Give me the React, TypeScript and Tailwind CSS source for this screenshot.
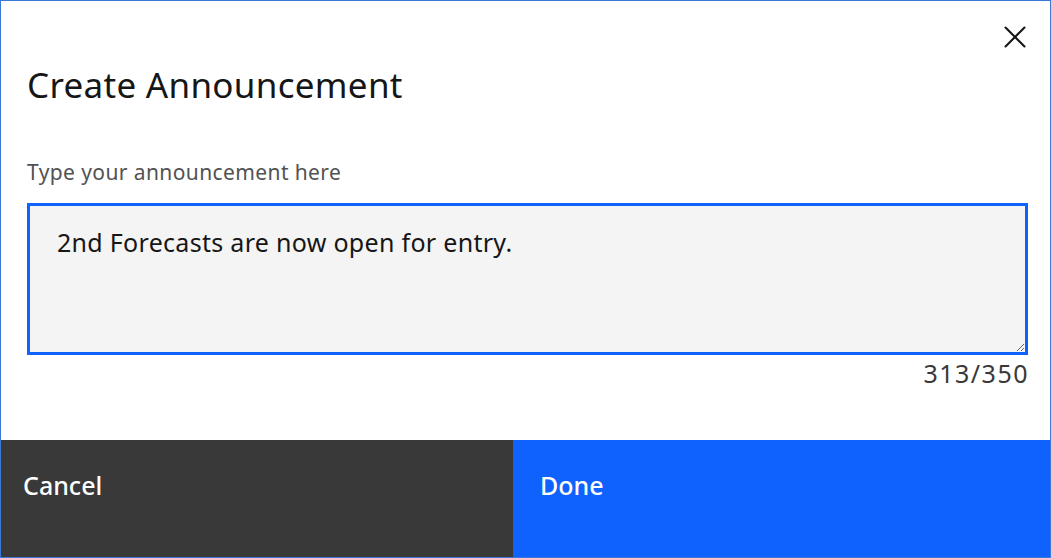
import { X } from 'lucide-react';

export default function App() {
  return (
    <div className="w-[1051px] h-[558px] bg-white border border-[#3c78d8] flex flex-col font-['Noto_Sans',sans-serif] text-[#161616] overflow-hidden">
      <div className="flex-1 flex flex-col pl-[26px] pr-[22px]">
        <div className="flex justify-end pt-[17px] -mr-[6px]">
          <button className="w-[38px] h-[38px] flex items-center justify-center text-[#161616]">
            <X className="w-[38px] h-[38px]" strokeWidth={1.3} />
          </button>
        </div>
        <h2 className="text-[35px] leading-[40px] font-normal mt-[9px] tracking-[0.3px]">Create Announcement</h2>
        <label className="text-[21px] leading-[24px] text-[#525252] mt-[55px] tracking-[0.4px]">Type your announcement here</label>
        <textarea
          readOnly
          value="2nd Forecasts are now open for entry."
          className="mt-[19px] h-[152px] w-full bg-[#f4f4f4] border-[3px] border-[#0f62fe] outline-none pl-[27px] pt-[20px] text-[25px] leading-[32px] tracking-[0.3px] text-[#161616] resize-y font-['Noto_Sans',sans-serif]"
        />
        <div className="text-right text-[25px] leading-[28px] tracking-[1.5px] -mr-[1px] text-[#393939] mt-[4px]">313/350</div>
      </div>
      <div className="h-[117px] flex shrink-0">
        <button className="w-[512px] bg-[#393939] text-white text-left pl-[22px] pt-[29px] flex items-start text-[25px] leading-[32px] font-medium">
          Cancel
        </button>
        <button className="flex-1 bg-[#0f62fe] text-white text-left pl-[27px] pt-[29px] flex items-start text-[25px] leading-[32px] font-medium">
          Done
        </button>
      </div>
    </div>
  );
}
